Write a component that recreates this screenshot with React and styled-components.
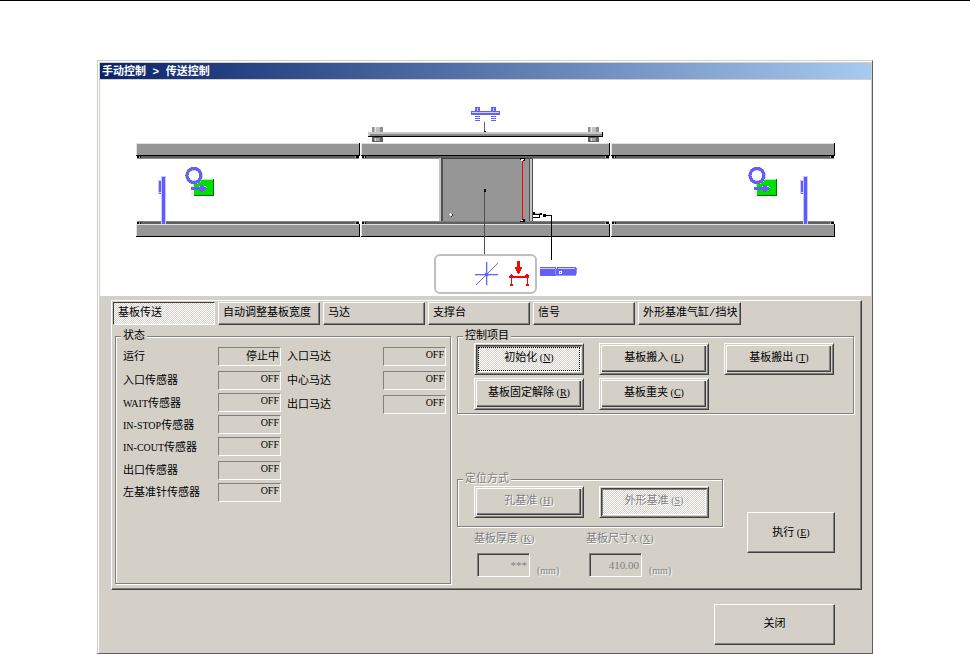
import React, { useState } from "react";
import styled, { createGlobalStyle, css } from "styled-components";

const tabs = ["基板传送", "自动调整基板宽度", "马达", "支撑台", "信号", "外形基准气缸/挡块"];

const sensors = [
  { id: "run", name: "运行", value: "停止中", spaced: true },
  { id: "in", name: "入口传感器", value: "OFF" },
  { id: "wait", latin: "WAIT", name: "传感器", value: "OFF" },
  { id: "stop", latin: "IN-STOP", name: "传感器", value: "OFF" },
  { id: "cout", latin: "IN-COUT", name: "传感器", value: "OFF", spaced: true },
  { id: "out", name: "出口传感器", value: "OFF" },
  { id: "pin", name: "左基准针传感器", value: "OFF" },
];

const motors = [
  { id: "motor-in", name: "入口马达", value: "OFF", spaced: true },
  { id: "motor-mid", name: "中心马达", value: "OFF", spaced: true },
  { id: "motor-out", name: "出口马达", value: "OFF" },
];

const controls = [
  { name: "初始化", hotkey: "N" },
  { name: "基板搬入", hotkey: "L" },
  { name: "基板搬出", hotkey: "T" },
  { name: "基板固定解除", hotkey: "R" },
  { name: "基板重夹", hotkey: "C" },
];

function Hotkey({ letter }) {
  return (
    <Latin>
      {" "}(<u>{letter}</u>)
    </Latin>
  );
}

function StatusRow({ item }) {
  return (
    <Row $spaced={item.spaced}>
      <RowLabel htmlFor={item.id}>
        {item.latin && <Latin>{item.latin}</Latin>}
        {item.name}
      </RowLabel>
      <StatusField
        id={item.id}
        value={item.value}
        $latin={item.value === "OFF"}
        readOnly
      />
    </Row>
  );
}

function Beam({ x, width }) {
  return (
    <g>
      <rect x={x} y="143" width={width} height="13" fill="#000" />
      <rect x={x} y="143" width={width - 1} height="12" fill="#e0e0e0" />
      <rect x={x + 1} y="144" width={width - 2} height="11" fill="#969696" />
      <rect x={x + 1} y="156" width={width - 2} height="2" fill="#606060" />
      <rect x={x + 1} y="158" width={width - 2} height="1" fill="#909090" />
      <rect x={x + 1} y="156" width="4" height="2" fill="#000" />
      <rect x={x + width - 5} y="156" width="4" height="2" fill="#000" />
      <rect x={x + 3} y="156" width="1" height="2" fill="#aaa" />
      <rect x={x + width - 5} y="156" width="1" height="2" fill="#aaa" />

      <rect x={x + 1} y="221" width={width - 2} height="1" fill="#808080" />
      <rect x={x + 1} y="222" width={width - 2} height="2" fill="#606060" />
      <rect x={x + 1} y="222" width="4" height="2" fill="#000" />
      <rect x={x + width - 5} y="222" width="4" height="2" fill="#000" />
      <rect x={x + 3} y="222" width="1" height="2" fill="#aaa" />
      <rect x={x + width - 5} y="222" width="1" height="2" fill="#aaa" />
      <rect x={x} y="224" width={width} height="13" fill="#000" />
      <rect x={x} y="224" width={width - 1} height="12" fill="#e0e0e0" />
      <rect x={x + 1} y="225" width={width - 2} height="11" fill="#969696" />
    </g>
  );
}

function RailPost({ x }) {
  return (
    <g>
      <rect x={x} y="127" width="11" height="5" fill="#909090" />
      <rect x={x + 2} y="127" width="6" height="5" fill="#c0c0c0" />
      <rect x={x + 3} y="127" width="1" height="5" fill="#e8e8e8" />
      <rect x={x} y="137" width="11" height="5" fill="#606060" />
      <rect x={x + 2} y="138" width="6" height="3" fill="#a0a0a0" />
      <rect x={x + 3} y="138" width="1" height="3" fill="#d8d8d8" />
    </g>
  );
}

function Stopper({ x }) {
  return (
    <g>
      <rect x={x - 4} y="180" width="5" height="14" fill="#c8c8ff" />
      <rect x={x - 3} y="181" width="3" height="11" fill="#6262f2" />
      <rect x={x - 3} y="193" width="3" height="1" fill="#6262f2" />
      <rect x={x - 1} y="176" width="5" height="48" fill="#c8c8ff" />
      <rect x={x} y="177" width="3" height="47" fill="#5c5cff" />
    </g>
  );
}

function Motor({ x }) {
  return (
    <g>
      <rect x={x} y="179" width="21" height="17" fill="#007000" />
      <rect x={x} y="179" width="20" height="16" fill="#a0f0a0" />
      <rect x={x + 1} y="180" width="19" height="15" fill="#00e000" />
      <rect x={x - 2} y="186" width="3" height="11" fill="#eef0ee" />
      <circle cx={x + 1} cy="175.500" r="7" fill="#fff" stroke="#c8c8ff" strokeWidth="4" />
      <circle cx={x + 1} cy="175.500" r="7" fill="none" stroke="#6262f2" strokeWidth="3" />
      <path d={`M${x + 6} 186h5l3 2`} stroke="#b8e8d8" fill="none" />
      <path
        d={`M${x - 2} 187h9v-2h2l5 3v1l-5 3h-2v-2h-9z`}
        fill="#6262f2"
      />
    </g>
  );
}

function ConveyorDiagram() {
  return (
    <Diagram viewBox="100 80 771 216" shapeRendering="crispEdges" role="img" aria-label="传送装置">
      {/* board clamp and upper rail */}
      <g fill="#6262f2">
        <rect x="475" y="107" width="5" height="4" />
        <rect x="491" y="107" width="5" height="4" />
        <rect x="471" y="111" width="29" height="4" />
        <path d="M475 116h5v1h-5zM475 118h5v1h-5zM475 120h5v1h-5zM491 116h5v1h-5zM491 118h5v1h-5zM491 120h5v1h-5z" />
      </g>
      <path d="M472 112h27v1h-27zM477 108h1v3h-1zM493 108h1v3h-1z" fill="#d0d0ff" />
      <RailPost x={372} />
      <RailPost x={588} />
      <rect x="368" y="132" width="235" height="5" fill="#000" />
      <rect x="368" y="132" width="234" height="4" fill="#c8c8c8" />
      <rect x="370" y="134" width="232" height="2" fill="#888" />
      <rect x="484" y="122" width="1" height="10" fill="#606060" />
      <rect x="484" y="131" width="2" height="1" fill="#000" />

      <Beam x={136} width={224} />
      <Beam x={361} width={249} />
      <Beam x={611} width={224} />

      {/* support table */}
      <rect x="439" y="158" width="94" height="63" fill="#c4c4c4" />
      <rect x="441" y="158" width="2" height="63" fill="#505050" />
      <rect x="443" y="158" width="87" height="63" fill="#969696" />
      <rect x="441" y="158" width="91" height="1" fill="#404040" />
      <rect x="529" y="158" width="1" height="63" fill="#505050" />
      <rect x="532" y="158" width="1" height="63" fill="#505050" />
      <rect x="522" y="161" width="1" height="59" fill="#f00" />
      <path d="M520 158h5v3h-3v-1h-2zM522 219h3v3h-5v-1h2z" fill="#000" />
      <path d="M521 159h3v1h-1v1h-2zM521 220h2v1h-2z" fill="#fff" />
      <path d="M450 213h1v1h1v1h1v1h-1v1h-1v-1h-1v-1h-1v-1h1z" fill="#e8e8e8" />
      <path d="M452 214h1v2h-1v1h-1v-1h1z" fill="#303030" />
      <rect x="484" y="191" width="1" height="63" fill="#505050" />
      <rect x="484" y="189" width="2" height="3" fill="#000" />

      {/* locating pin */}
      <path d="M533 212h2v1h7v2h-2v3h-7v-1h6v-2h-6z" fill="#000" />
      <path d="M535 213h5v1h-5z" fill="#c0c0c0" />
      <path d="M543 214h3v1h6v45h-1v-44h-5v1h-3z" fill="#000" />

      {/* tool box */}
      <rect x="435" y="255" width="101" height="38" rx="5" fill="#fff" stroke="#bfbfbf" strokeWidth="2" shapeRendering="auto" />
      <g shapeRendering="auto">
        <path d="M487.5 262v24M475 275.5h23" stroke="#d0d0ff" />
        <path d="M486.5 262v23M475 274.5h23M476 285l22-22" stroke="#6262f2" />
        <circle cx="486.500" cy="274.500" r="2" fill="#6262f2" />
      </g>
      <path d="M517 261h3v6h2v2h-1v2h-1v2h-1v1h-1v-1h-1v-2h-1v-2h-1v-2h2z" fill="#f00" />
      <path d="M510 274h2v1h1v1h12v-1h1v-1h2v1h1v3h-1v6h1v2h-3v-2h1v-6h-15v6h1v2h-3v-2h1v-6h-2v-2h1v-1h1z" fill="#f00" />

      <path d="M540 267h36v1h1v6h-1v2h-36z" fill="#6262f2" />
      <path d="M540 268h15v1h-15zM558 268h17v1h-17zM556 267h1v2h-1z" fill="#d0d0ff" />
      <path d="M555 269h1v6h-1zM556 275h20v1h-20zM576 269h1v5h-1z" fill="#9494fa" />
      <path d="M559 271h3v3h-3z" fill="#fff" />
      <rect x="560" y="272" width="1" height="1" fill="#6262f2" />

      <Stopper x={162} />
      <Stopper x={804} />
      <Motor x={193} />
      <Motor x={756} />
    </Diagram>
  );
}

function App() {
  const [tab, setTab] = useState(0);
  const [active, setActive] = useState("N");

  return (
    <Page>
      <GlobalStyle />
      <Window>
        <TitleBar>手动控制 &gt; 传送控制</TitleBar>
        <Scene>
          <ConveyorDiagram />
        </Scene>
        <Body>
          <TabPanel>
            <TabBar role="tablist">
              {tabs.map((name, i) => (
                <Tab
                  key={name}
                  type="button"
                  role="tab"
                  aria-selected={tab === i}
                  onClick={() => setTab(i)}
                >
                  {name}
                </Tab>
              ))}
            </TabBar>
            <Content>
              <Group>
                <Legend>状态</Legend>
                <StatusLists>
                  <StatusList>
                    {sensors.map((item) => (
                      <StatusRow key={item.id} item={item} />
                    ))}
                  </StatusList>
                  <StatusList>
                    {motors.map((item) => (
                      <StatusRow key={item.id} item={item} />
                    ))}
                  </StatusList>
                </StatusLists>
              </Group>
              <Side>
                <Group>
                  <Legend>控制项目</Legend>
                  <ControlGrid>
                    {controls.map((item) => (
                      <ControlButton
                        key={item.hotkey}
                        type="button"
                        aria-pressed={active === item.hotkey}
                        $pressed={active === item.hotkey}
                        $focused={active === item.hotkey}
                        onClick={() => setActive(item.hotkey)}
                      >
                        {item.name}
                        <Hotkey letter={item.hotkey} />
                      </ControlButton>
                    ))}
                  </ControlGrid>
                </Group>
                <Setup>
                  <div>
                    <Group disabled>
                      <Legend $disabled>定位方式</Legend>
                      <MethodRow>
                        <ControlButton type="button" disabled>
                          孔基准
                          <Hotkey letter="H" />
                        </ControlButton>
                        <ControlButton type="button" disabled $pressed>
                          外形基准
                          <Hotkey letter="S" />
                        </ControlButton>
                      </MethodRow>
                    </Group>
                    <Dimensions>
                      <Dimension>
                        <label htmlFor="thickness">
                          基板厚度
                          <Hotkey letter="K" />
                        </label>
                        <Measure>
                          <MeasureInput id="thickness" defaultValue="***" disabled />
                          <Latin>(mm)</Latin>
                        </Measure>
                      </Dimension>
                      <Dimension>
                        <label htmlFor="size-x">
                          基板尺寸<Latin>X</Latin>
                          <Hotkey letter="X" />
                        </label>
                        <Measure>
                          <MeasureInput id="size-x" defaultValue="410.00" disabled />
                          <Latin>(mm)</Latin>
                        </Measure>
                      </Dimension>
                    </Dimensions>
                  </div>
                  <RunButton type="button">
                    执行
                    <Hotkey letter="E" />
                  </RunButton>
                </Setup>
              </Side>
            </Content>
          </TabPanel>
          <Footer>
            <CloseButton type="button">关闭</CloseButton>
          </Footer>
        </Body>
      </Window>
    </Page>
  );
}

export default App;

const GlobalStyle = createGlobalStyle`
  * {
    box-sizing: border-box;
  }
  body {
    margin: 0;
    background: #fff;
  }
  body, button, input {
    color: #000;
    font: 11px/13px "Liberation Mono", "Noto Sans CJK SC", monospace;
  }
`;

const disabledText = css`
  color: #808080;
  text-shadow: 1px 1px 0 #fff;
`;

const dither = css`
  background: repeating-conic-gradient(#fff 0 25%, #d4d0c8 0 50%) 0 0 / 2px 2px;
`;

const serif = css`
  font-family: "Liberation Serif", serif;
  font-size: 10px;
`;

const Page = styled.div`
  border-top: 1px solid #000;
  padding: 59px 10% 0;
`;

const Window = styled.main`
  background: #d4d0c8;
  border: 1px solid #d4d0c8;
  border-right-color: #606060;
  border-bottom-color: #606060;
  box-shadow: inset 1px 1px 0 #fff;
  padding: 2px 1px 0 2px;
`;

const TitleBar = styled.h1`
  margin: 0 0 1px;
  padding: 1px 0 0 2px;
  height: 16px;
  color: #fff;
  font-size: 11px;
  line-height: 16px;
  white-space: nowrap;
  background: linear-gradient(to right, #0a246a, #a6caf0);
`;

const Scene = styled.div`
  background: #fff;
`;

const Diagram = styled.svg`
  display: block;
  width: 100%;
  height: 216px;
`;

const Body = styled.div`
  padding: 4px 9px 8px 11px;
`;

const TabPanel = styled.section`
  border: 1px solid #fff;
  border-right-color: #404040;
  border-bottom-color: #404040;
  box-shadow: inset -1px -1px 0 #808080;
  padding: 1px 7px 5px 1px;
`;

const TabBar = styled.div`
  display: flex;
  gap: 3px;
`;

const Tab = styled.button`
  flex: 0 1 102px;
  height: 23px;
  padding: 0 2px 0 4px;
  text-align: left;
  white-space: nowrap;
  background: #d4d0c8;
  border: 1px solid #fff;
  border-right-color: #404040;
  border-bottom-color: #404040;
  box-shadow: inset -1px -1px 0 #808080;

  &[aria-selected="true"] {
    ${dither}
    border-color: #404040 #fff #fff #404040;
    box-shadow: none;
  }
`;

const Content = styled.div`
  display: grid;
  grid-template-columns: minmax(0, 336fr) minmax(0, 397fr);
  gap: 6px;
  min-height: 254px;
  margin: 5px 0 0 2px;
`;

const Group = styled.fieldset`
  min-width: 0;
  margin: 0;
  padding: 0;
  border: 1px solid #808080;
  box-shadow: 1px 1px 0 #fff, inset 1px 1px 0 #fff;
`;

const Legend = styled.legend`
  margin-left: 5px;
  padding: 0 2px;
  line-height: 13px;
  background: #d4d0c8;
  ${(props) => props.$disabled && disabledText}
`;

const Latin = styled.span`
  ${serif}
  white-space: pre;
`;

const StatusLists = styled.div`
  display: grid;
  grid-template-columns: 158px minmax(0, 1fr);
  gap: 6px;
  padding: 4px 4px 0 7px;
`;

const StatusList = styled.div`
  display: flex;
  flex-direction: column;
`;

const Row = styled.div`
  display: flex;
  justify-content: space-between;
  height: 19px;
  margin-bottom: ${(props) => (props.$spaced ? "5px" : "3px")};
  white-space: nowrap;
`;

const RowLabel = styled.label`
  padding-top: 4px;
`;

const StatusField = styled.input`
  width: 63px;
  height: 19px;
  padding: 0 1px 4px;
  text-align: right;
  background: #d4d0c8;
  border: 1px solid #808080;
  border-right-color: #fff;
  border-bottom-color: #fff;
  ${(props) => props.$latin && serif}
`;

const Side = styled.div`
  display: flex;
  flex-direction: column;
  justify-content: space-between;
`;

const ControlGrid = styled.div`
  display: grid;
  grid-template-columns: repeat(3, minmax(0, 1fr));
  gap: 3px 15px;
  padding: 0 19px 3px 16px;
`;

const ControlButton = styled.button`
  height: 32px;
  padding: 0 4px 2px;
  white-space: nowrap;
  background: #d4d0c8;
  border: 1px solid #fff;
  border-right-color: #404040;
  border-bottom-color: #404040;
  box-shadow: inset 1px 1px 0 #d4d0c8, inset -1px -1px 0 #808080,
    inset 2px 2px 0 #fff, inset -2px -2px 0 #d4d0c8,
    inset -3px -3px 0 #404040, inset -4px -4px 0 #808080;

  ${(props) =>
    props.$pressed &&
    css`
      ${dither}
      box-shadow: inset 1px 1px 0 #d4d0c8, inset -1px -1px 0 #808080,
        inset 2px 2px 0 #404040, inset -2px -2px 0 #d4d0c8,
        inset 3px 3px 0 #808080, inset -3px -3px 0 #fff;
    `}

  ${(props) =>
    props.$focused &&
    css`
      outline: 1px dotted #000;
      outline-offset: -5px;
    `}

  &:disabled {
    ${disabledText}
  }
`;

const Setup = styled.div`
  display: flex;
  justify-content: space-between;
  align-items: flex-end;
  padding: 0 19px 7px 0;
`;

const MethodRow = styled.div`
  display: grid;
  grid-template-columns: repeat(2, 110px);
  gap: 15px;
  padding: 0 13px 8px 16px;
`;

const Dimensions = styled.div`
  display: flex;
  padding: 5px 0 0 17px;
  ${disabledText}
`;

const Dimension = styled.div`
  width: 112px;
  white-space: nowrap;
`;

const Measure = styled.div`
  display: flex;
  align-items: flex-end;
  gap: 7px;
  padding: 7px 0 0 3px;
`;

const MeasureInput = styled.input`
  width: 53px;
  height: 24px;
  padding: 0 2px;
  text-align: right;
  font-family: "Liberation Serif", serif;
  color: #808080;
  background: #d4d0c8;
  border: 1px solid #808080;
  border-right-color: #fff;
  border-bottom-color: #fff;
  box-shadow: inset 1px 1px 0 #404040;
`;

const PushButton = styled.button`
  background: #d4d0c8;
  border: 1px solid #fff;
  border-right-color: #404040;
  border-bottom-color: #404040;
  box-shadow: inset -1px -1px 0 #808080;
`;

const RunButton = styled(PushButton)`
  width: 88px;
  height: 41px;
  margin-bottom: 24px;
`;

const Footer = styled.footer`
  display: flex;
  justify-content: flex-end;
  padding: 14px 27px 0 0;
`;

const CloseButton = styled(PushButton)`
  width: 121px;
  height: 41px;
`;
